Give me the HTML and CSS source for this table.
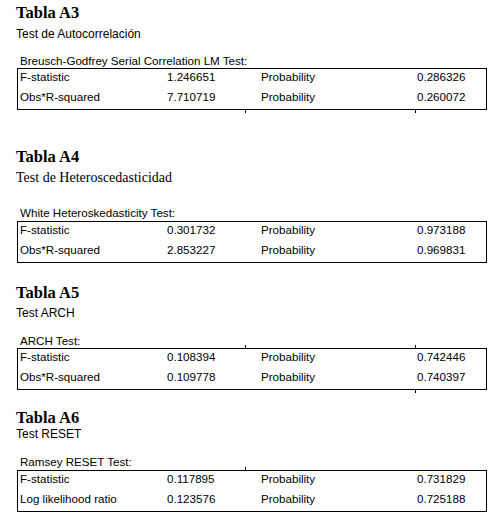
FILE: index.html
```html
<!DOCTYPE html>
<html lang="es">
<head>
<meta charset="utf-8">
<link rel="stylesheet" href="styles.css">
</head>
<body>
<div class="page">
  <section class="sec sec-a3">
    <h2 class="title">Tabla A3</h2>
    <p class="sub sans">Test de Autocorrelación</p>
    <p class="caption">Breusch-Godfrey Serial Correlation LM Test:</p>
    <div class="box">
      <div class="row"><span>F-statistic</span><span>1.246651</span><span>Probability</span><span>0.286326</span></div>
      <div class="row"><span>Obs*R-squared</span><span>7.710719</span><span>Probability</span><span>0.260072</span></div>
      <i class="tick tick-bottom tick-mid"></i>
      <i class="tick tick-bottom tick-right"></i>
    </div>
  </section>

  <section class="sec sec-a4">
    <h2 class="title">Tabla A4</h2>
    <p class="sub serif">Test de Heteroscedasticidad</p>
    <p class="caption">White Heteroskedasticity Test:</p>
    <div class="box">
      <div class="row"><span>F-statistic</span><span>0.301732</span><span>Probability</span><span>0.973188</span></div>
      <div class="row"><span>Obs*R-squared</span><span>2.853227</span><span>Probability</span><span>0.969831</span></div>
    </div>
  </section>

  <section class="sec sec-a5">
    <h2 class="title">Tabla A5</h2>
    <p class="sub sans">Test ARCH</p>
    <p class="caption">ARCH Test:</p>
    <div class="box">
      <div class="row"><span>F-statistic</span><span>0.108394</span><span>Probability</span><span>0.742446</span></div>
      <div class="row"><span>Obs*R-squared</span><span>0.109778</span><span>Probability</span><span>0.740397</span></div>
      <i class="tick tick-top tick-mid"></i>
      <i class="tick tick-top tick-right"></i>
      <i class="tick tick-bottom tick-right"></i>
    </div>
  </section>

  <section class="sec sec-a6">
    <h2 class="title">Tabla A6</h2>
    <p class="sub sans">Test RESET</p>
    <p class="caption">Ramsey RESET Test:</p>
    <div class="box">
      <div class="row"><span>F-statistic</span><span>0.117895</span><span>Probability</span><span>0.731829</span></div>
      <div class="row"><span>Log likelihood ratio</span><span>0.123576</span><span>Probability</span><span>0.725188</span></div>
      <i class="tick tick-top tick-mid"></i>
    </div>
  </section>
</div>
</body>
</html>
```

FILE: styles.css
```css
html, body {
  margin: 0;
  padding: 0;
  background: #fff;
  color: #000;
}

.page {
  padding: 0 0 0 16px;
  width: 482px;
}

.sec {
  display: flex;
  flex-direction: column;
}

.title {
  margin: 0;
  font-family: "Liberation Serif", "Times New Roman", serif;
  font-weight: bold;
  font-size: 16.5px;
  line-height: 18px;
}

.sub {
  margin: 0;
}

.sub.sans {
  font-family: "Liberation Sans", Arial, sans-serif;
  font-size: 12px;
  line-height: 14px;
}

.sub.serif {
  font-family: "Liberation Serif", "Times New Roman", serif;
  font-size: 14px;
  line-height: 16px;
}

.caption {
  margin: 0;
  padding-left: 4px;
  font-family: "Liberation Sans", Arial, sans-serif;
  font-size: 11.6px;
  line-height: 14px;
}

.box {
  position: relative;
  margin-left: 1px;
  width: 468px;
  border: 1px solid #000;
  font-family: "Liberation Sans", Arial, sans-serif;
  font-size: 11.6px;
}

.row {
  display: grid;
  grid-template-columns: 147px 94px 156px 1fr;
  padding-left: 2px;
  line-height: 16px;
  padding-bottom: 4px;
  white-space: nowrap;
}

.tick {
  position: absolute;
  width: 1px;
  height: 3px;
  background: #000;
}

.tick-top { top: -4px; }
.tick-bottom { bottom: -4px; }
.tick-mid { left: 227px; }
.tick-right { left: 397px; }

/* section spacing */
.sec-a3 { padding-top: 4px; }
.sec-a3 .sub { margin-top: 5px; }
.sec-a3 .caption { margin-top: 13px; }

.sec-a4 { margin-top: 38px; }
.sec-a4 .sub { margin-top: 4px; }
.sec-a4 .caption { margin-top: 20px; }
.sec-a4 .box { margin-top: 1px; }

.sec-a5 { margin-top: 21px; }
.sec-a5 .sub { margin-top: 4px; }
.sec-a5 .caption { margin-top: 14px; }

.sec-a6 { margin-top: 19px; }
.sec-a6 .sub { margin-top: 0; }
.sec-a6 .caption { margin-top: 14px; }
.sec-a6 .box { margin-top: 1px; }
```
